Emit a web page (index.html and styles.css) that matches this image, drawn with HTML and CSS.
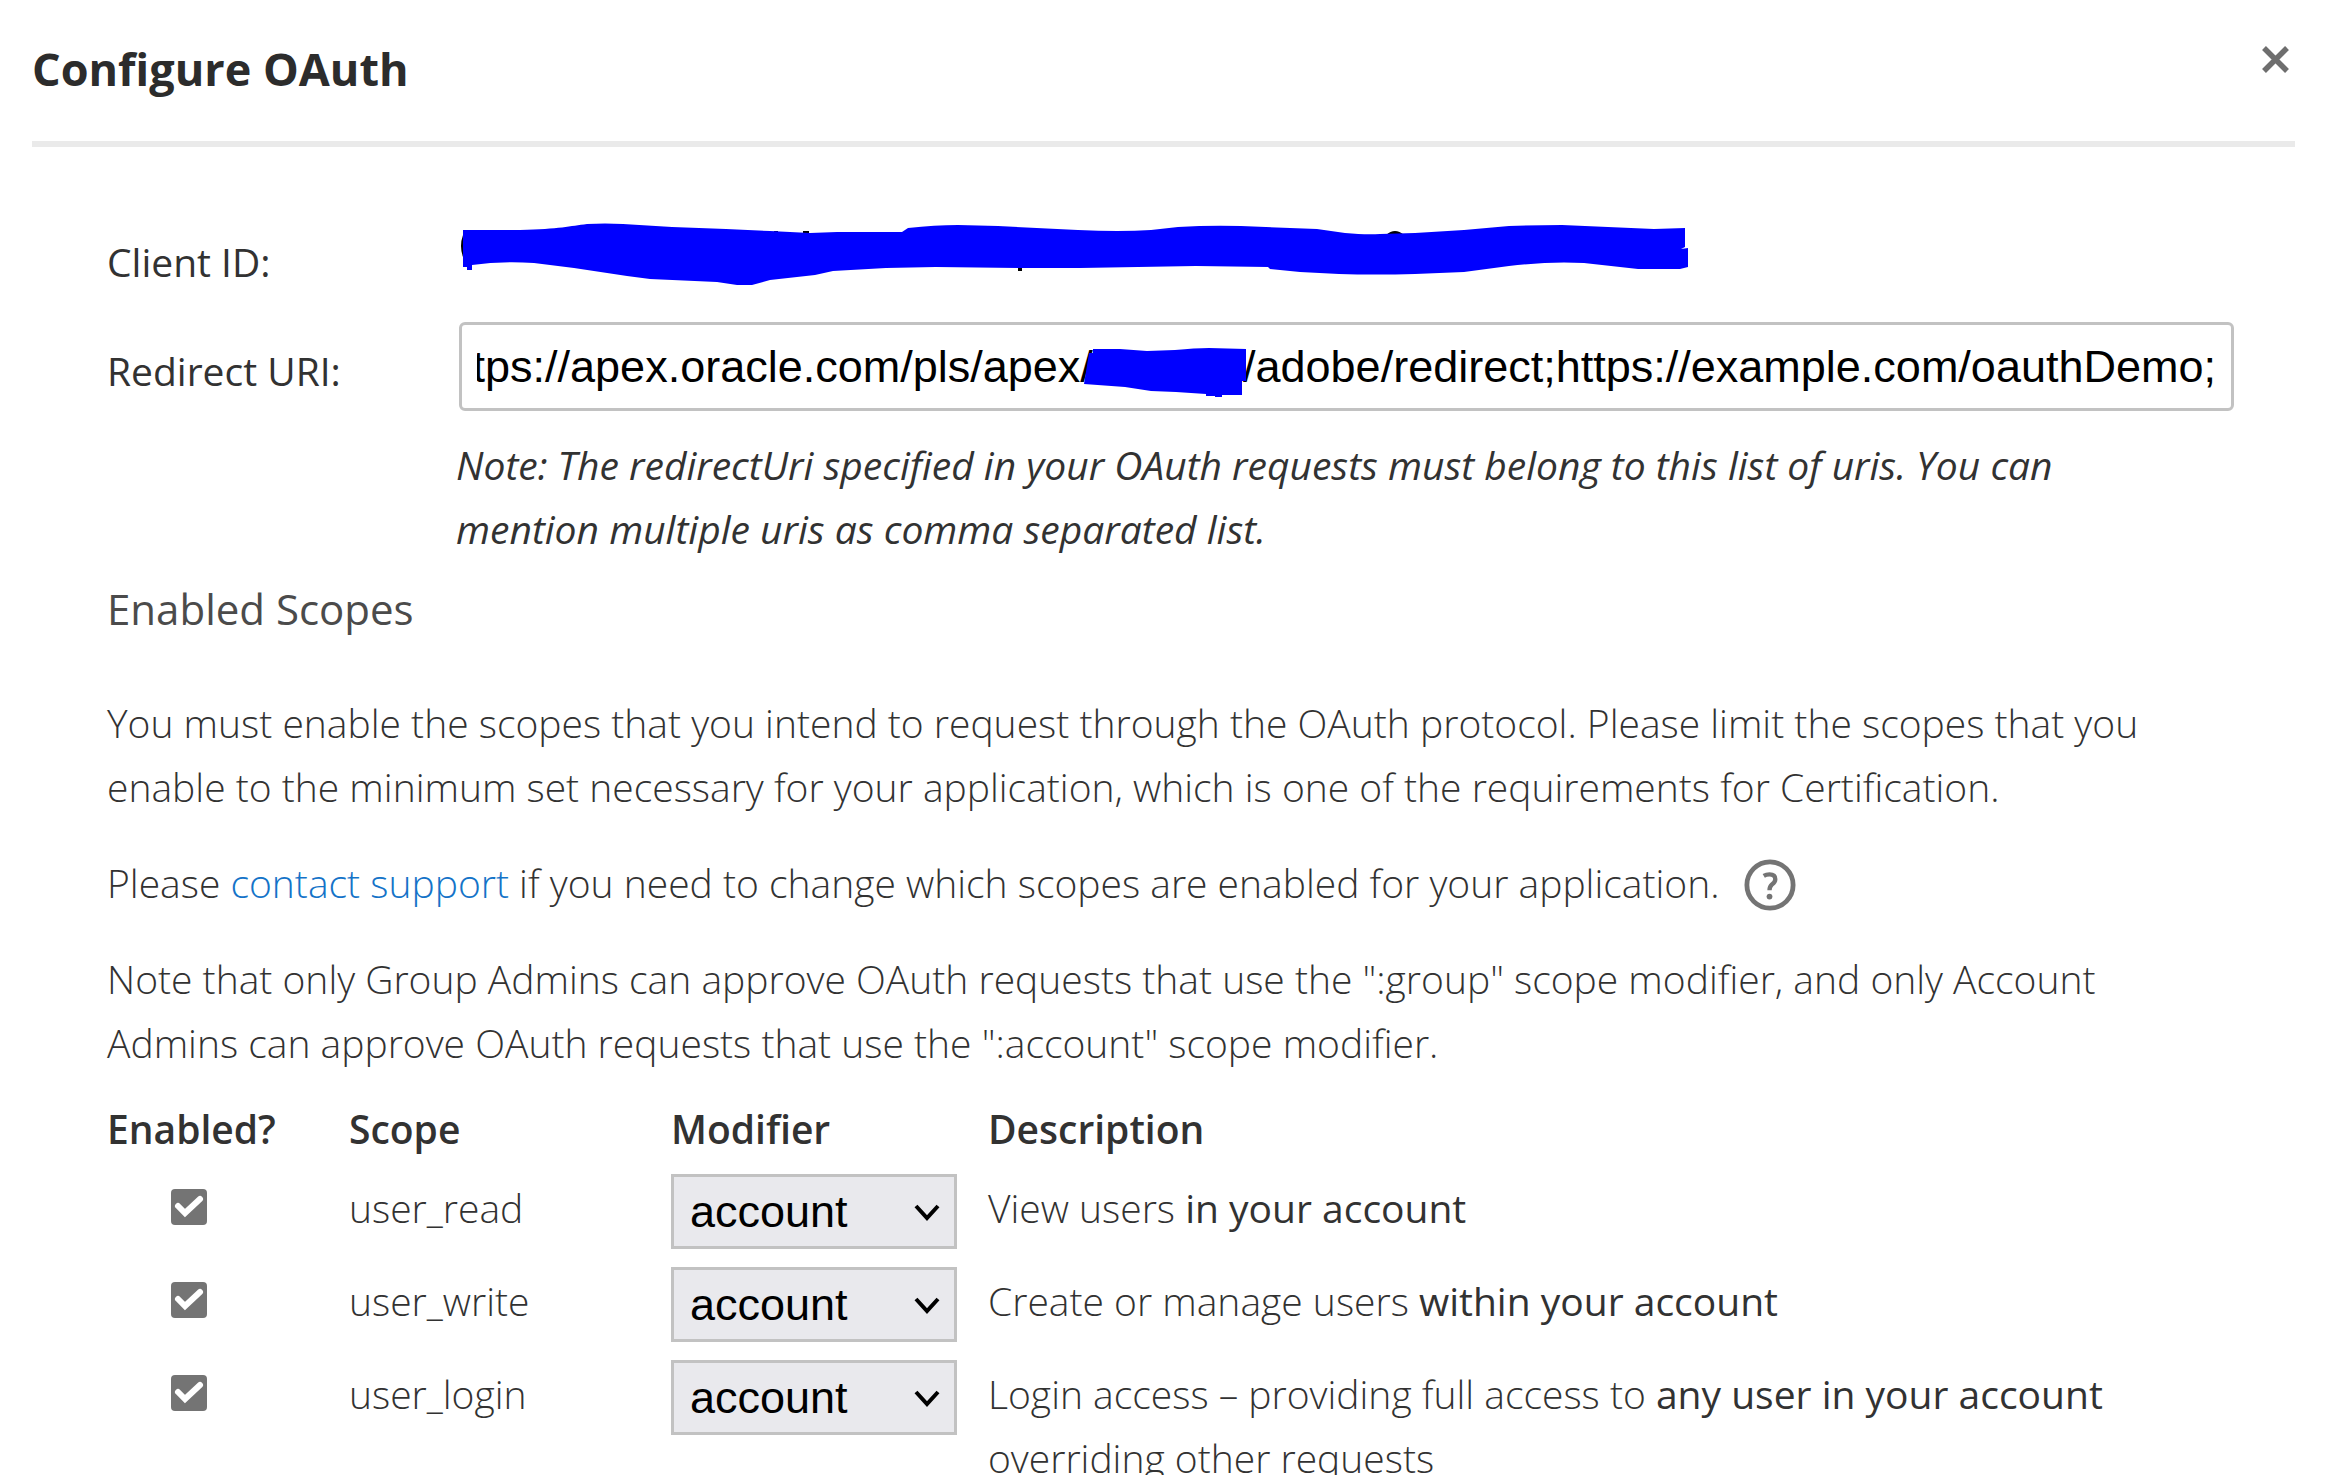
FILE: index.html
```html
<!DOCTYPE html>
<html lang="en">
<head>
    <meta charset="UTF-8">
    <meta name="viewport" content="width=device-width, initial-scale=1.0">
    <title>Configure OAuth</title>
    <link rel="stylesheet" href="styles.css">
</head>
<body>
    <header class="dialog-header">
        <h1>Configure OAuth</h1>
        <button type="button" class="close" aria-label="Close">
            <svg width="27" height="27" viewBox="0 0 27 27"><path d="M2 2L25 25M25 2L2 25" fill="none" stroke="#6e6e6e" stroke-width="5.5"/></svg>
        </button>
    </header>

    <form class="dialog-body">
        <!-- Client details -->
        <div class="field">
            <span class="label client-label">Client ID:</span>
            <svg class="client-id" width="1232" height="66" viewBox="459 222 1232 66" role="img" aria-label="Hidden client ID">
                <path d="M463 235Q459 246 463 257zM803 231h6v4h-6zM774 231h4v3h-4zM1018 267h4v4h-4zM1386 235Q1395 227 1404 235z" fill="#000"/>
                <path d="M463 230L520 230C560 229 570 226 587 224Q605 223 623 224L672 227L726 229L770 231L810 233L837 232L902 232L908 228Q935 225 958 225L998 226L1078 230Q1120 232 1151 230L1178 227Q1210 225 1241 226L1317 229L1345 233Q1366 235 1380 234L1415 233L1464 230L1509 226Q1535 225 1562 225L1654 229L1685 228V247L1681 249L1688 248V267L1680 269H1638L1611 266L1584 263Q1550 261 1509 266L1464 272L1415 274Q1375 275 1339 274L1300 272L1270 269L1268 267L1196 266L1080 268H1020L936 267L886 268L833 271L815 275L770 280L752 285H737L717 282L650 279L627 276L574 268L534 263Q500 261 472 265V270H467V267H463z" fill="#00f"/>
            </svg>
        </div>
        <div class="field">
            <label class="label uri-label" for="redirectUri">Redirect URI:</label>
            <div class="uri-box">
                <input type="text" id="redirectUri" value="https://apex.oracle.com/pls/apex/000000/adobe/redirect;https://example.com/oauthDemo;">
                <svg class="mask" width="164" height="50" viewBox="1083 348 164 50" aria-hidden="true"><path d="M1093 349L1120 349L1147 351L1175 350Q1195 348 1209 348L1246 349V381H1242V395H1222V397H1215V396H1206V394L1176 392L1151 391L1125 387L1084 384L1089 353H1093z" fill="#00f"/></svg>
            </div>
        </div>
        <p class="note">Note: The redirectUri specified in your OAuth requests must belong to this list of uris. You can mention multiple uris as comma separated list.</p>

        <!-- Scopes -->
        <h2>Enabled Scopes</h2>
        <p>You must enable the scopes that you intend to request through the OAuth protocol. Please limit the scopes that you enable to the minimum set necessary for your application, which is one of the requirements for Certification.</p>
        <p>Please <a href="#support">contact support</a> if you need to change which scopes are enabled for your application.
            <button type="button" class="help" aria-label="Help"><svg width="52" height="52" viewBox="0 0 54 54" fill="none" stroke="#747474"><circle cx="27" cy="27" r="24" stroke-width="5"/><path d="M20.5 17.5Q23 16 26.5 16Q32.5 16 32.5 21Q32.5 24 29 26.5Q26.5 28.5 26.5 32.5" stroke-width="4.5"/><circle cx="26.5" cy="39" r="3" fill="#747474" stroke="none"/></svg></button>
        </p>
        <p>Note that only Group Admins can approve OAuth requests that use the ":group" scope modifier, and only Account Admins can approve OAuth requests that use the ":account" scope modifier.</p>

        <table class="scopes">
            <thead>
                <tr>
                    <th class="col-enabled">Enabled?</th>
                    <th class="col-scope">Scope</th>
                    <th class="col-modifier">Modifier</th>
                    <th>Description</th>
                </tr>
            </thead>
            <tbody>
                <tr>
                    <td><input type="checkbox" id="userRead" checked></td>
                    <td><label for="userRead">user_read</label></td>
                    <td class="modifier">
                        <select aria-label="user_read modifier"><option>account</option><option>group</option><option>self</option></select>
                    </td>
                    <td>View users <b>in your account</b></td>
                </tr>
                <tr>
                    <td><input type="checkbox" id="userWrite" checked></td>
                    <td><label for="userWrite">user_write</label></td>
                    <td class="modifier">
                        <select aria-label="user_write modifier"><option>account</option><option>group</option><option>self</option></select>
                    </td>
                    <td>Create or manage users <b>within your account</b></td>
                </tr>
                <tr>
                    <td><input type="checkbox" id="userLogin" checked></td>
                    <td><label for="userLogin">user_login</label></td>
                    <td class="modifier">
                        <select aria-label="user_login modifier"><option>account</option><option>group</option><option>self</option></select>
                    </td>
                    <td>Login access – providing full access to <b>any user in your account</b> overriding other requests</td>
                </tr>
            </tbody>
        </table>
    </form>

    <script>
        // show the end of the URI list, where new entries are added
        const uri = document.getElementById('redirectUri');
        uri.scrollLeft = uri.scrollWidth;
    </script>
</body>
</html>
```
FILE: styles.css
```css
* {
    box-sizing: border-box;
}
html {
    overflow-x: hidden;
    scrollbar-width: none;
}
body {
    margin: 0;
    background-color: #fff;
    color: #323232;
    font-family: "Open Sans", "Noto Sans", sans-serif;
    font-size: 39px;
    font-weight: 300;
    line-height: 64px;
}
.dialog-header {
    display: flex;
    justify-content: space-between;
    align-items: flex-start;
    margin: 0 32px;
    padding: 37px 0 40px;
    border-bottom: 6px solid #eaeaea;
}
h1 {
    margin: 0;
    font-size: 45px;
    font-weight: 700;
    color: #2c2c2c;
}
button {
    display: inline-flex;
    border: none;
    background: none;
    cursor: pointer;
}
.close {
    padding: 9px 6px;
}
.dialog-body {
    padding: 75px 93px 0 107px;
}
.field {
    display: grid;
    grid-template-columns: 352px 1fr;
    align-items: start;
    margin-bottom: 22px;
}
.label {
    font-weight: 400;
}
.client-label {
    padding: 8px 0 6px;
}
.uri-label {
    padding-top: 17px;
}
.client-id {
    max-width: 100%;
}
.uri-box {
    position: relative;
}
.uri-box input {
    display: block;
    width: 100%;
    height: 89px;
    padding: 0 15px;
    border: 3px solid #c2c2c2;
    border-radius: 6px;
    color: #000;
    font: 45px "Liberation Sans", Arial, sans-serif;
}
.mask {
    position: absolute;
    top: 26px;
    right: 987px;
}
p {
    margin: 0 40px 32px 0;
}
.note {
    margin: 0 40px 16px 349px;
    font-style: italic;
    font-weight: 400;
}
h2 {
    margin: 0 0 50px;
    color: #4b4b4b;
    font-size: 42px;
    font-weight: 400;
}
a {
    color: #1473c8;
    text-decoration: none;
}
.help {
    margin: -11px 0 -5px 14px;
    padding: 0;
    vertical-align: middle;
}
.scopes {
    width: 100%;
    margin-top: -10px;
    table-layout: fixed;
    border-collapse: collapse;
}
th {
    padding: 0 0 7px;
    text-align: left;
    font-weight: 600;
}
.col-enabled {
    width: 242px;
}
.col-scope {
    width: 322px;
}
.col-modifier {
    width: 317px;
}
td {
    padding: 8px 0 0;
    vertical-align: top;
}
.modifier {
    padding: 6px 0 12px;
}
b {
    font-weight: 500;
}
input[type="checkbox"] {
    display: block;
    appearance: none;
    width: 36px;
    height: 36px;
    margin: 13px 0 0 64px;
    border-radius: 4px;
    background: #747474 url("data:image/svg+xml,%3Csvg xmlns='http://www.w3.org/2000/svg' viewBox='0 0 36 36'%3E%3Cpath d='M7 17l7 7L29 10' fill='none' stroke='%23fff' stroke-width='6' stroke-linecap='round'/%3E%3C/svg%3E");
}
select {
    display: block;
    appearance: none;
    width: 286px;
    height: 75px;
    padding: 0 16px;
    border: 3px solid #c2c2c2;
    border-radius: 0;
    background: #e9e9ed url("data:image/svg+xml,%3Csvg xmlns='http://www.w3.org/2000/svg' viewBox='0 0 26 18'%3E%3Cpath d='M2 3l11 12L24 3' fill='none' stroke='%23000' stroke-width='4'/%3E%3C/svg%3E") no-repeat right 14px center / 26px 18px;
    color: #000;
    font: 45px "Liberation Sans", Arial, sans-serif;
}
```
